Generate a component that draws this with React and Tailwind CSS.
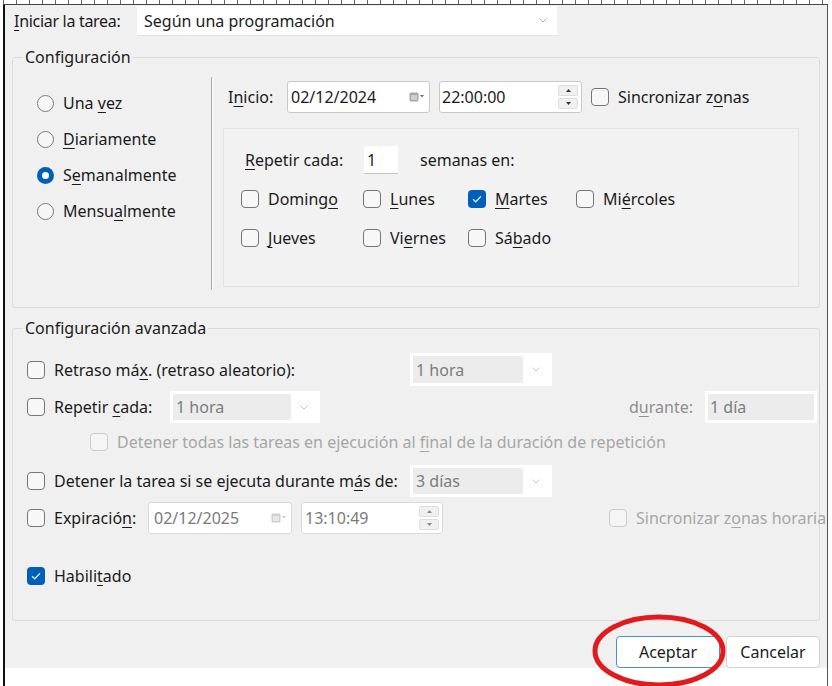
import React from "react";

const K = ({ c }) => (
  <span className="underline decoration-1 underline-offset-[3px]">{c}</span>
);

function Radio({ on }) {
  return on ? (
    <span className="w-[17px] h-[17px] rounded-full bg-[#005fb8] flex items-center justify-center shrink-0">
      <span className="w-[7px] h-[7px] rounded-full bg-white" />
    </span>
  ) : (
    <span className="block w-[17px] h-[17px] rounded-full border border-[#7a7a7a] bg-[#f6f6f6] shrink-0" />
  );
}

function Check({ on, disabled }) {
  if (on)
    return (
      <span className="w-[18px] h-[18px] rounded-[4px] bg-[#005fb8] flex items-center justify-center shrink-0">
        <svg width="10" height="8" viewBox="0 0 10 8">
          <path d="M1 4.2 L3.8 6.8 L9 1.2" fill="none" stroke="#dbe8f6" strokeWidth="1.3" />
        </svg>
      </span>
    );
  return (
    <span
      className={
        disabled
          ? "block w-[18px] h-[18px] rounded-[4px] border border-[#cbcbcb] bg-[#f5f5f5] shrink-0"
          : "block w-[18px] h-[18px] rounded-[4px] border border-[#767676] bg-[#f7f7f7] shrink-0"
      }
    />
  );
}

function Chevron({ color = "#9a9a9a" }) {
  return (
    <svg width="8" height="5" viewBox="0 0 8 5">
      <path d="M0.5 0.5 L4 4 L7.5 0.5" fill="none" stroke={color} strokeWidth="1" />
    </svg>
  );
}

function CalIcon({ light }) {
  const c = light ? "#d0d0d0" : "#a8a8a8";
  return (
    <svg width="16" height="10" viewBox="0 0 16 10">
      <rect x="0.5" y="0.5" width="9" height="9" rx="1.5" fill={c} />
      <rect x="2" y="3" width="6" height="5" fill={light ? "#e8e8e8" : "#cfcfcf"} />
      <path d="M11 3 L15 3 L13 5.5 Z" fill={light ? "#c8c8c8" : "#6a6a6a"} />
    </svg>
  );
}

function Spinner({ light }) {
  const tri = light ? "#8a8a8a" : "#333";
  return (
    <div className="flex flex-col gap-[2px]">
      <div className="w-[20px] h-[11px] bg-[#f0f0f0] border border-[#dedede] rounded-[2px] flex items-center justify-center">
        <svg width="5" height="3" viewBox="0 0 5 3"><path d="M0 3 L2.5 0 L5 3 Z" fill={tri} /></svg>
      </div>
      <div className="w-[20px] h-[11px] bg-[#f0f0f0] border border-[#dedede] rounded-[2px] flex items-center justify-center">
        <svg width="5" height="3" viewBox="0 0 5 3"><path d="M0 0 L2.5 3 L5 0 Z" fill={tri} /></svg>
      </div>
    </div>
  );
}

function DCombo({ outer, inner, text }) {
  return (
    <div className={outer + " shrink-0 h-full bg-white flex items-center p-[3px]"}>
      <div className={inner + " h-full bg-[#ececec] flex items-center pl-[3px] text-[#7c7c7c]"}>{text}</div>
      <div className="flex-1 flex justify-center">
        <Chevron color="#c0c0c0" />
      </div>
    </div>
  );
}

export default function App() {
  return (
    <div className="w-[832px] h-[686px] bg-white overflow-hidden relative font-['Noto_Sans',sans-serif] text-[16px] text-[#1b1b1b] leading-none">
      <div className="ml-[3px] w-[825px] h-[5px] border-b border-[#444] bg-[repeating-linear-gradient(90deg,#666_0px,#666_1px,transparent_1px,transparent_13px)]" />
      <div className="ml-[3px] w-[825px] h-[681px] border-l-2 border-l-[#111] border-r border-r-[#555] flex flex-col">
        <div className="h-[663px] bg-[#f0f0f0] flex flex-col">
          {/* Iniciar la tarea */}
          <div className="mt-[1px] h-[30px] flex items-center">
            <div className="pl-[9px] w-[132px] shrink-0 tracking-[-0.3px] whitespace-nowrap">
              <K c="I" />niciar la tarea:
            </div>
            <div className="w-[420px] h-[30px] bg-white border-b border-[#e2e2e2] flex items-center justify-between pl-[7px] pr-[10px]">
              <span>Según una programación</span>
              <Chevron color="#b0b0b0" />
            </div>
          </div>

          {/* Configuración */}
          <fieldset className="ml-[7px] mt-[11px] w-[808px] h-[261px] border border-[#dadada] rounded-[3px] min-w-0">
            <legend className="ml-[10px] px-[2px] h-[20px] leading-[20px]">Configuración</legend>
            <div className="flex">
              <div className="w-[198px] shrink-0 pt-[18px] pl-[24px] flex flex-col">
                <div className="h-[36px] flex items-center gap-[9px]">
                  <Radio />
                  <span>Una <K c="v" />ez</span>
                </div>
                <div className="h-[36px] flex items-center gap-[9px]">
                  <Radio />
                  <span><K c="D" />iariamente</span>
                </div>
                <div className="h-[36px] flex items-center gap-[9px]">
                  <Radio on />
                  <span>S<K c="e" />manalmente</span>
                </div>
                <div className="h-[36px] flex items-center gap-[9px]">
                  <Radio />
                  <span>Mensu<K c="a" />lmente</span>
                </div>
              </div>
              <div className="mt-[10px] h-[213px] w-[2px] shrink-0 border-l border-l-[#a8a8a8] border-r border-r-white" />
              <div className="flex flex-col pl-[10px]">
                <div className="mt-[14px] h-[32px] flex items-center pl-[5px] whitespace-nowrap">
                  <div className="w-[59px] shrink-0">I<K c="n" />icio:</div>
                  <div className="w-[143px] shrink-0 h-[32px] bg-white border border-[#c9c9c9] rounded-[3px] flex items-center justify-between pl-[3px] pr-[4px]">
                    <span>02/12/2024</span>
                    <CalIcon />
                  </div>
                  <div className="ml-[9px] w-[143px] shrink-0 h-[32px] bg-white border border-[#c9c9c9] rounded-[3px] flex items-center justify-between pl-[2px] pr-[3px]">
                    <span>22:00:00</span>
                    <Spinner />
                  </div>
                  <div className="ml-[9px] shrink-0"><Check /></div>
                  <div className="ml-[9px] shrink-0">Sincronizar z<K c="o" />nas</div>
                </div>
                <div className="mt-[15px] w-[576px] h-[159px] border border-[#e2e2e2] bg-[#f2f2f2] flex flex-col">
                  <div className="mt-[17px] pl-[21px] h-[28px] flex items-center">
                    <div className="w-[119px] shrink-0"><K c="R" />epetir cada:</div>
                    <div className="w-[34px] h-[28px] bg-white border-b border-[#c4c4c4] flex items-center pl-[3px]">1</div>
                    <div className="ml-[22px]">semanas en:</div>
                  </div>
                  <div className="mt-[10px] pl-[17px] grid grid-cols-[122px_105px_108px_auto] grid-rows-[30px_30px] gap-y-[9px]">
                    <div className="flex items-center gap-[9px]"><Check /><span>Doming<K c="o" /></span></div>
                    <div className="flex items-center gap-[9px]"><Check /><span><K c="L" />unes</span></div>
                    <div className="flex items-center gap-[9px]"><Check on /><span><K c="M" />artes</span></div>
                    <div className="flex items-center gap-[9px]"><Check /><span>Mi<K c="é" />rcoles</span></div>
                    <div className="flex items-center gap-[9px]"><Check /><span><K c="J" />ueves</span></div>
                    <div className="flex items-center gap-[9px]"><Check /><span>Vi<K c="e" />rnes</span></div>
                    <div className="flex items-center gap-[9px]"><Check /><span>Sá<K c="b" />ado</span></div>
                  </div>
                </div>
              </div>
            </div>
          </fieldset>

          {/* Configuración avanzada */}
          <fieldset className="ml-[7px] mt-[10px] w-[808px] h-[303px] border border-[#dadada] rounded-[3px] min-w-0">
            <legend className="ml-[10px] px-[2px] h-[20px] leading-[20px]">Configuración avanzada</legend>
            <div className="pl-[14px] flex flex-col whitespace-nowrap">
              <div className="mt-[15px] h-[33px] flex items-center">
                <div className="w-[383px] shrink-0 flex items-center gap-[9px]">
                  <Check />
                  <span>Retraso má<K c="x" />. (retraso aleatorio):</span>
                </div>
                <DCombo outer="w-[142px]" inner="w-[110px]" text="1 hora" />
              </div>
              <div className="mt-[5px] h-[32px] flex items-center">
                <div className="w-[143px] shrink-0 flex items-center gap-[9px]">
                  <Check />
                  <span>Repetir <K c="c" />ada:</span>
                </div>
                <DCombo outer="w-[150px]" inner="w-[118px]" text="1 hora" />
                <div className="ml-auto mr-[12px] text-[#8e8e8e]">d<K c="u" />rante:</div>
                <div className="w-[112px] shrink-0 mr-[2px] h-full bg-white flex items-center p-[3px]">
                  <div className="w-full h-full bg-[#ececec] flex items-center pl-[2px] text-[#7c7c7c]">1 día</div>
                </div>
              </div>
              <div className="mt-[5px] h-[28px] flex items-center pl-[63px] gap-[9px] text-[#a6a6a6]">
                <Check disabled />
                <span>Detener todas las tareas en ejecución al <K c="f" />inal de la duración de repetición</span>
              </div>
              <div className="mt-[9px] h-[32px] flex items-center">
                <div className="w-[383px] shrink-0 flex items-center gap-[9px]">
                  <Check />
                  <span>Detener la tarea si se ejecuta durante m<K c="á" />s de:</span>
                </div>
                <DCombo outer="w-[142px]" inner="w-[110px]" text="3 días" />
              </div>
              <div className="mt-[5px] h-[32px] flex items-center">
                <div className="w-[121px] shrink-0 flex items-center gap-[9px]">
                  <Check />
                  <span>Expiració<K c="n" />:</span>
                </div>
                <div className="w-[144px] shrink-0 h-[32px] bg-white border border-[#dadada] rounded-[3px] flex items-center justify-between pl-[5px] pr-[4px] text-[#7a7a7a]">
                  <span>02/12/2025</span>
                  <CalIcon light />
                </div>
                <div className="ml-[9px] w-[142px] shrink-0 h-[32px] bg-white border border-[#dadada] rounded-[3px] flex items-center justify-between pl-[3px] pr-[3px] text-[#7a7a7a]">
                  <span>13:10:49</span>
                  <Spinner light />
                </div>
                <div className="ml-[166px] shrink-0 flex items-center gap-[9px] text-[#a6a6a6]">
                  <Check disabled />
                  <span>Sincronizar z<K c="o" />nas horaria</span>
                </div>
              </div>
              <div className="mt-[28px] h-[28px] flex items-center gap-[9px]">
                <Check on />
                <span>Habili<K c="t" />ado</span>
              </div>
            </div>
          </fieldset>

          {/* Buttons */}
          <div className="mt-[15px] h-[32px] flex justify-end gap-[6px] pr-[7px]">
            <div className="w-[104px] shrink-0 h-[32px] bg-white border border-[#4a90d9] rounded-[4px] flex items-center justify-center">Aceptar</div>
            <div className="w-[94px] shrink-0 h-[32px] bg-white border border-[#d2d2d2] rounded-[4px] flex items-center justify-center">Cancelar</div>
          </div>
        </div>
        <div className="flex-1 bg-white" />
      </div>
      <svg className="absolute left-[586px] top-[610px]" width="146" height="80" viewBox="0 0 146 80">
        <ellipse cx="73" cy="41" rx="64" ry="34" fill="none" stroke="#e11b1d" strokeWidth="5" />
      </svg>
    </div>
  );
}
